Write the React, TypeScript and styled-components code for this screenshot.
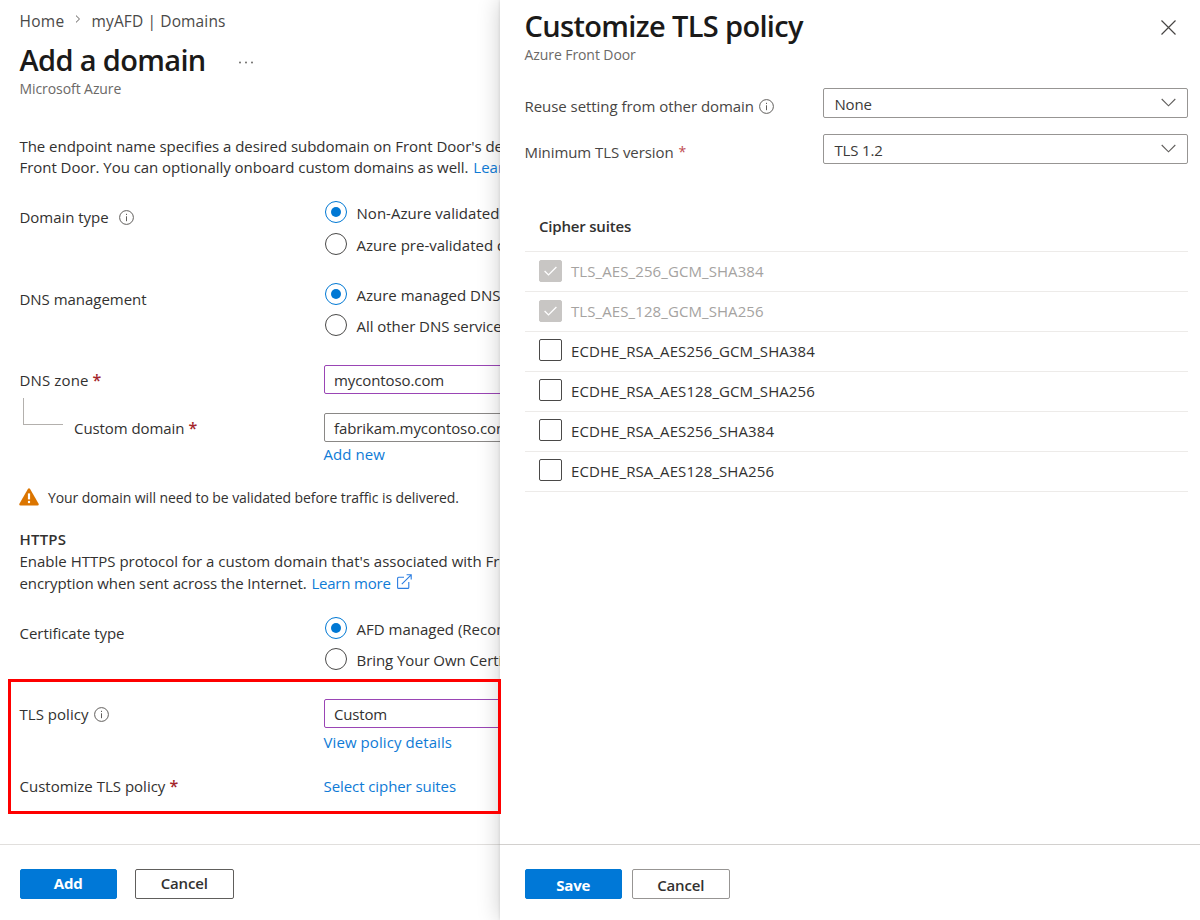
import React from "react";
import styled, { createGlobalStyle } from "styled-components";

const Global = createGlobalStyle`
  * { box-sizing: border-box; }
  body { margin: 0; background: #fff; }
  button, input { font: inherit; }
`;

const Screen = styled.div`
  position: relative;
  display: flex;
  width: 1200px;
  height: 920px;
  overflow: hidden;
  background: #fff;
  color: #323130;
  font: 400 15px/22px "Open Sans", "Noto Sans", sans-serif;
  white-space: nowrap;
`;

const Page = styled.main`
  display: flex;
  flex-direction: column;
  width: 500px;
  height: 920px;
  overflow: hidden;
`;

const PageBody = styled.div`
  flex: 1;
  padding: 10px 0 0 19.5px;
  min-height: 0;
`;

const Panel = styled.aside`
  display: flex;
  flex-direction: column;
  width: 700px;
  height: 920px;
  background: #fff;
  box-shadow: 0 0 22px rgba(0, 0, 0, 0.2), 0 0 3px rgba(0, 0, 0, 0.12);
`;

const PanelBody = styled.div`
  flex: 1;
  padding: 6px 12px 0 24.5px;
  min-height: 0;
`;

const Track = styled.span<{ $by: number }>`
  letter-spacing: ${(p) => p.$by}px;
`;

const Breadcrumb = styled.nav`
  display: flex;
  align-items: center;
  height: 22px;
  font-size: 15.5px;
  color: #4a4948;
  svg { margin: -4px 11px 0 10px; }
`;

const TitleRow = styled.header<{ $top?: number; $height: number }>`
  display: flex;
  align-items: flex-start;
  margin-top: ${(p) => p.$top ?? 0}px;
  height: ${(p) => p.$height}px;
`;

const Title = styled.h1`
  margin: 0;
  font-size: 29px;
  font-weight: 600;
  line-height: 39px;
  letter-spacing: -0.65px;
  color: #1b1a19;
`;

const MoreButton = styled.button`
  display: flex;
  margin: 21px 0 0 33px;
  padding: 0;
  border: 0;
  background: none;
`;

const CloseButton = styled.button`
  display: flex;
  margin: 14px 12px 0 auto;
  padding: 0;
  border: 0;
  background: none;
`;

const Subtitle = styled.div`
  font-size: 14px;
  letter-spacing: -0.08px;
  color: #6b6967;
`;

const Paragraph = styled.p<{ $top?: number }>`
  margin: ${(p) => p.$top ?? 0}px 0 0;
  line-height: 21.5px;
`;

const Link = styled.a<{ $shift?: number }>`
  margin-left: ${(p) => p.$shift ?? 0}px;
  color: #0f7bd6;
  svg { margin-left: 6px; vertical-align: 0; }
`;

const Field = styled.div<{ $top: number }>`
  display: grid;
  grid-template-columns: 304px 1fr;
  align-items: start;
  margin-top: ${(p) => p.$top}px;
`;

const Label = styled.div<{ $drop?: number; $gap?: number }>`
  display: flex;
  align-items: center;
  gap: ${(p) => p.$gap ?? 4}px;
  margin-top: ${(p) => p.$drop ?? 0}px;
  height: 22px;
`;

const Star = styled.span<{ $light?: boolean }>`
  color: ${(p) => (p.$light ? "#c04a50" : "#a4262c")};
  font-weight: ${(p) => (p.$light ? 400 : 600)};
  font-size: ${(p) => (p.$light ? 14 : 16)}px;
`;

const Choices = styled.div<{ $gap: number }>`
  display: flex;
  flex-direction: column;
  gap: ${(p) => p.$gap}px;
`;

const Choice = styled.label`
  display: flex;
  height: 22px;
  padding-left: 1px;
  gap: 10px;
  > span:last-child { padding-top: 1px; }
`;

const Radio = styled.span<{ $on?: boolean }>`
  display: flex;
  flex: none;
  align-items: center;
  justify-content: center;
  width: 22px;
  height: 22px;
  border: 1px solid ${(p) => (p.$on ? "#0078d4" : "#4a4948")};
  border-radius: 50%;
  &::after {
    content: "";
    width: 10px;
    height: 10px;
    border-radius: 50%;
    background: ${(p) => (p.$on ? "#0078d4" : "transparent")};
  }
`;

const Control = styled.div<{ $changed?: boolean }>`
  width: 400px;
  height: 29px;
  padding: 0 9.5px;
  border: 1px solid ${(p) => (p.$changed ? "#9a45b5" : "#8a8886")};
  border-radius: 2px;
  line-height: 28px;
`;

const Below = styled.div<{ $top: number }>`
  margin-top: ${(p) => p.$top}px;
  height: 22px;
`;

const Nested = styled.div`
  display: flex;
  margin-left: 3.5px;
`;

const Elbow = styled.span`
  width: 40px;
  height: 27px;
  margin: -15px 11px 0 0;
  border: solid #b3b0ad;
  border-width: 0 0 1px 1px;
`;

const Notice = styled.div`
  display: flex;
  align-items: center;
  gap: 9px;
  height: 22px;
  margin: 22px 0 0 -0.5px;
  font-size: 14px;
  letter-spacing: -0.08px;
  svg { margin-top: -3px; }
`;

const SectionTitle = styled.h2`
  margin: 19px 0 0;
  font-size: 15px;
  font-weight: 600;
  line-height: 22px;
  letter-spacing: 0.2px;
`;

const Footer = styled.footer<{ $gap: number; $left: number; $line: string }>`
  display: flex;
  gap: ${(p) => p.$gap}px;
  height: 76px;
  padding: 24px 0 0 ${(p) => p.$left}px;
  border-top: 1px solid ${(p) => p.$line};
`;

const Button = styled.button<{ $primary?: boolean; $edge?: string; $drop?: number }>`
  width: ${(p) => (p.$primary ? 97.5 : 98.5)}px;
  height: 30px;
  padding: ${(p) => p.$drop ?? 0}px 0 ${(p) => 2 - (p.$drop ?? 0)}px;
  border: 1px solid ${(p) => (p.$primary ? "#0078d4" : p.$edge)};
  border-radius: 2px;
  background: ${(p) => (p.$primary ? "#0078d7" : "#fff")};
  color: ${(p) => (p.$primary ? "#fff" : "#323130")};
  font-weight: ${(p) => (p.$primary ? 700 : 600)};
  letter-spacing: -0.17px;
  line-height: 26px;
`;

const PanelField = styled.div<{ $top: number }>`
  display: grid;
  grid-template-columns: 298.5px 1fr;
  align-items: start;
  margin-top: ${(p) => p.$top}px;
  color: #484644;
`;

const Select = styled.div`
  display: flex;
  justify-content: space-between;
  height: 30px;
  padding: 0 11px 0 10.5px;
  border: 1px solid #979593;
  border-radius: 2px;
  line-height: 30px;
  color: #3b3a39;
  svg { margin-top: 9px; }
`;

const SuiteTable = styled.div`
  margin-top: 51px;
`;

const SuiteHead = styled.div`
  height: 37px;
  padding: 0 0 0 14.5px;
  border-bottom: 1px solid #edebe9;
  font-weight: 600;
  letter-spacing: -0.19px;
`;

const SuiteRow = styled.label<{ $locked?: boolean }>`
  display: flex;
  align-items: flex-start;
  gap: 9px;
  height: 40px;
  padding: 8px 0 0 14.5px;
  border-bottom: 1px solid #edebe9;
  color: ${(p) => (p.$locked ? "#a5a3a1" : "#323130")};
  letter-spacing: 0.09px;
`;

const Box = styled.span<{ $locked?: boolean }>`
  display: flex;
  align-items: center;
  justify-content: center;
  width: 23px;
  height: 22px;
  margin-top: ${(p) => (p.$locked ? 0 : -1)}px;
  border: 1px solid ${(p) => (p.$locked ? "#c8c6c4" : "#4a4948")};
  border-radius: 2px;
  background: ${(p) => (p.$locked ? "#c8c6c4" : "#fff")};
`;

const Highlight = styled.div`
  position: absolute;
  left: 8px;
  top: 679px;
  width: 493px;
  height: 135px;
  border: 3px solid #fe0000;
  pointer-events: none;
`;

const Info = () => (
  <svg width="15" height="15" viewBox="0 0 15 15" fill="none" stroke="#605e5c">
    <circle cx="7.5" cy="7.5" r="6.9" />
    <path d="M7.5 6.3v4.9" />
    <path d="M7.5 3.8v1.2" />
  </svg>
);

const External = () => (
  <svg width="15" height="15" viewBox="0 0 15 15" fill="none" stroke="#2a7de1" strokeWidth="1.1">
    <path d="M7 3.2H1.6q-1 0-1 1v9.2q0 1 1 1h9.2q1 0 1-1V8" />
    <path d="M4.8 10.2 14.2.8M9.6.8h4.6v4.7" />
  </svg>
);

const Chevron = () => (
  <svg width="15" height="10" viewBox="0 0 15 10" fill="none" stroke="#605e5c" strokeWidth="1.1">
    <path d="M.7 1 7.5 7.8 14.3 1" />
  </svg>
);

const Warning = () => (
  <svg width="20" height="18" viewBox="0 0 20 18">
    <path d="M8.9 1.1q1.1-1.6 2.2 0l8.5 14.6q.6 1.6-1.1 1.7h-17q-1.7-.1-1.1-1.7z" fill="#db7500" />
    <path d="M10 5.4v6" stroke="#fff" strokeWidth="2.2" />
    <circle cx="10" cy="14" r="1.2" fill="#fff" />
  </svg>
);

const Check = () => (
  <svg width="13" height="10" viewBox="0 0 13 10" fill="none" stroke="#fff" strokeWidth="1.3">
    <path d="M.6 5 4.5 8.9 12.4 1" />
  </svg>
);

const suites = [
  { name: "TLS_AES_256_GCM_SHA384", locked: true },
  { name: "TLS_AES_128_GCM_SHA256", locked: true },
  { name: "ECDHE_RSA_AES256_GCM_SHA384" },
  { name: "ECDHE_RSA_AES128_GCM_SHA256" },
  { name: "ECDHE_RSA_AES256_SHA384" },
  { name: "ECDHE_RSA_AES128_SHA256" },
];

export default function App() {
  return (
    <Screen>
      <Global />
      <Page>
        <PageBody>
          <Breadcrumb>
            <Track $by={0.3}>Home</Track>
            <svg width="6" height="8" viewBox="0 0 6 8" fill="none" stroke="#605e5c">
              <path d="M1 .6 4.5 4 1 7.4" />
            </svg>
            <Track $by={0.13}>myAFD | Domains</Track>
          </Breadcrumb>
          <TitleRow $top={8} $height={38}>
            <Title>Add a domain</Title>
            <MoreButton aria-label="More">
              <svg width="14" height="3" viewBox="0 0 14 3" fill="#605e5c">
                <circle cx="1" cy="1.5" r="0.9" />
                <circle cx="7" cy="1.5" r="0.9" />
                <circle cx="13" cy="1.5" r="0.9" />
              </svg>
            </MoreButton>
          </TitleRow>
          <Subtitle>Microsoft Azure</Subtitle>

          <Paragraph $top={35.5}>
            <Track $by={-0.045}>The endpoint name specifies a desired subdomain on Front Door's default</Track>
            <br />
            <Track $by={-0.037}>Front Door. You can optionally onboard custom domains as well. </Track>
            <Link $shift={1}>Learn more</Link>
          </Paragraph>

          <Field $top={22.5}>
            <Label $drop={5} $gap={10}>
              <Track $by={-0.04}>Domain type</Track>
              <Info />
            </Label>
            <Choices $gap={10}>
              <Choice><Radio $on /><Track $by={0.03}>Non-Azure validated domain</Track></Choice>
              <Choice><Radio /><span>Azure pre-validated domain</span></Choice>
            </Choices>
          </Field>

          <Field $top={28}>
            <Label $drop={5}><Track $by={-0.03}>DNS management</Track></Label>
            <Choices $gap={9}>
              <Choice><Radio $on /><span>Azure managed DNS</span></Choice>
              <Choice><Radio /><Track $by={-0.04}>All other DNS services</Track></Choice>
            </Choices>
          </Field>

          <Field $top={29}>
            <Label $drop={4}><Track $by={0.13}>DNS zone</Track><Star>*</Star></Label>
            <Control $changed><Track $by={-0.1}>mycontoso.com</Track></Control>
          </Field>

          <Field $top={19}>
            <Nested>
              <Elbow />
              <Label $drop={4}><Track $by={-0.07}>Custom domain</Track><Star>*</Star></Label>
            </Nested>
            <div>
              <Control><Track $by={-0.1}>fabrikam.mycontoso.com</Track></Control>
              <Below $top={1}><Link><Track $by={0.07}>Add new</Track></Link></Below>
            </div>
          </Field>

          <Notice>
            <Warning />
            <span>Your domain will need to be validated before traffic is delivered.</span>
          </Notice>

          <SectionTitle>HTTPS</SectionTitle>
          <Paragraph $top={1}>
            <span>Enable HTTPS protocol for a custom domain that's associated with Front</span>
            <br />
            <Track $by={-0.1}>encryption when sent across the Internet. </Track>
            <Link $shift={1}><Track $by={-0.2}>Learn more</Track><External /></Link>
          </Paragraph>

          <Field $top={23}>
            <Label $drop={5}><Track $by={-0.04}>Certificate type</Track></Label>
            <Choices $gap={9}>
              <Choice><Radio $on /><span>AFD managed (Recommended)</span></Choice>
              <Choice><Radio /><Track $by={-0.06}>Bring Your Own Certificate</Track></Choice>
            </Choices>
          </Field>

          <Field $top={29}>
            <Label $drop={4} $gap={5}><Track $by={0.03}>TLS policy</Track><Info /></Label>
            <div>
              <Control $changed><Track $by={-0.17}>Custom</Track></Control>
              <Below $top={3}><Link><Track $by={0.08}>View policy details</Track></Link></Below>
            </div>
          </Field>

          <Field $top={22}>
            <Label><span>Customize TLS policy</span><Star>*</Star></Label>
            <Link><Track $by={-0.08}>Select cipher suites</Track></Link>
          </Field>
        </PageBody>
        <Footer $gap={18} $left={19.5} $line="#e1dfdd">
          <Button $primary>Add</Button>
          <Button $edge="#605e5c">Cancel</Button>
        </Footer>
      </Page>

      <Panel>
        <PanelBody>
          <TitleRow $height={38}>
            <Title>Customize TLS policy</Title>
            <CloseButton aria-label="Close">
              <svg width="15" height="15" viewBox="0 0 15 15" stroke="#484644" strokeWidth="1.2">
                <path d="M.5.5 14.5 14.5M14.5.5.5 14.5" />
              </svg>
            </CloseButton>
          </TitleRow>
          <Subtitle>Azure Front Door</Subtitle>

          <PanelField $top={22}>
            <Label $drop={7} $gap={5}><Track $by={-0.05}>Reuse setting from other domain</Track><Info /></Label>
            <Select><Track $by={-0.2}>None</Track><Chevron /></Select>
          </PanelField>
          <PanelField $top={16}>
            <Label $drop={7} $gap={5}><Track $by={-0.08}>Minimum TLS version</Track><Star $light>*</Star></Label>
            <Select><Track $by={-0.18}>TLS 1.2</Track><Chevron /></Select>
          </PanelField>

          <SuiteTable>
            <SuiteHead>Cipher suites</SuiteHead>
            {suites.map((s) => (
              <SuiteRow key={s.name} $locked={s.locked}>
                <Box $locked={s.locked}>{s.locked && <Check />}</Box>
                <span>{s.name}</span>
              </SuiteRow>
            ))}
          </SuiteTable>
        </PanelBody>
        <Footer $gap={9.5} $left={24.5} $line="#d2d0ce">
          <Button $primary $drop={2}>Save</Button>
          <Button $edge="#979593" $drop={2}>Cancel</Button>
        </Footer>
      </Panel>
      <Highlight />
    </Screen>
  );
}
